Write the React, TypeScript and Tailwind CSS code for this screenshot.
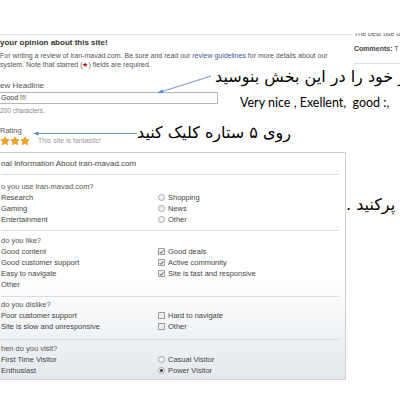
import React from "react";

const Radio = ({ checked = false }: { checked?: boolean }) => (
  <span className="inline-flex items-center justify-center w-[7px] h-[7px] rounded-full border border-[#a9a9a9] bg-[#f1f1f1] mr-[3px] shrink-0">
    {checked && <span className="w-[3px] h-[3px] rounded-full bg-[#333]" />}
  </span>
);

const Check = ({ checked = false }: { checked?: boolean }) => (
  <span className="inline-flex items-center justify-center w-[7px] h-[7px] border border-[#a0a0a0] bg-[#eef0f3] mr-[3px] shrink-0">
    {checked && (
      <svg viewBox="0 0 8 8" className="w-[6px] h-[6px]">
        <path d="M1.2 4.2 L3.2 6.2 L6.8 1.5" fill="none" stroke="#333" strokeWidth="1.3" />
      </svg>
    )}
  </span>
);

type Item = { left?: string; right?: string; kind?: "radio" | "check"; checked?: boolean };

const Section = ({
  title,
  items,
  cls,
}: {
  title: string;
  items: Item[];
  cls: string;
}) => (
  <div className={cls}>
    <div className="leading-[10px] h-[10px] text-[7.5px] text-[#555]">{title}</div>
    {items.map((it, i) => (
      <div key={i} className="grid grid-cols-[157px_1fr] h-[11px] leading-[11px] text-[7.5px] text-[#444]">
        <div className="whitespace-nowrap">{it.left ?? ""}</div>
        <div className="flex items-center whitespace-nowrap">
          {it.right && (
            <>
              {it.kind === "radio" ? <Radio checked={it.checked} /> : <Check checked={it.checked} />}
              <span>{it.right}</span>
            </>
          )}
        </div>
      </div>
    ))}
  </div>
);

const Star = () => (
  <svg viewBox="0 0 24 24" className="w-[10px] h-[10px]">
    <path
      d="M12 1.8l3.1 6.6 7.1.8-5.3 4.9 1.5 7.1L12 17.6l-6.4 3.6 1.5-7.1L1.8 9.2l7.1-.8z"
      fill="#f4a81d"
      stroke="#c97a08"
      strokeWidth="1.2"
    />
  </svg>
);

export default function App() {
  return (
    <div className="relative w-[400px] h-[400px] overflow-hidden bg-white font-['Liberation_Sans',Arial,sans-serif]">
      <div className="flex">
        {/* main column */}
        <div className="w-[352px] shrink-0">
          <div className="h-[35px] border-b border-[#e3e3e3]" />
          <div className="mt-[3px] leading-[10px] text-[8px] font-bold text-[#333] whitespace-nowrap">
            your opinion about this site!
          </div>
          <div className="mt-[3px] leading-[9px] text-[7px] text-[#555] whitespace-nowrap">
            For writing a review of iran-mavad.com. Be sure and read our{" "}
            <span className="text-[#3b5998]">review guidelines</span> for more details about our
            <br />
            system. Note that starred (<span className="text-[#b00]">★</span>) fields are required.
          </div>
          <div className="mt-[12px] leading-[10px] text-[8px] text-[#555]">ew Headline</div>
          <div className="mt-[1px] -ml-[2px] w-[220px] h-[12px] border border-[#b5b5b5] pl-[2px] leading-[10px] text-[7px] text-[#333]">
            Good !!!
          </div>
          <div className="mt-[3px] leading-[8px] text-[6.5px] text-[#888]">200 characters.</div>
          <div className="mt-[11px] leading-[10px] text-[7.5px] text-[#555]">Rating</div>
          <div className="flex items-center h-[10px]">
            <Star />
            <Star />
            <Star />
            <span className="ml-[8px] text-[7px] text-[#999]">This site is fantastic!</span>
          </div>
          {/* form box */}
          <div className="mt-[6px] -ml-[2px] w-[348px] border border-[#cfcfcf] bg-linear-to-b from-white from-[55%] to-[#e4e9ee] pl-[2px] pr-[6px]">
            <div className="pt-[6px] pb-[5px] border-b border-[#dcdcdc] leading-[10px] text-[8px] text-[#444]">
              nal Information About iran-mavad.com
            </div>
            <Section
              cls="pt-[7px] pb-[5px] border-b border-[#dcdcdc]"
              title="o you use iran-mavad.com?"
              items={[
                { left: "Research", right: "Shopping", kind: "radio" },
                { left: "Gaming", right: "News", kind: "radio" },
                { left: "Entertainment", right: "Other", kind: "radio" },
              ]}
            />
            <Section
              cls="pt-[5px] pb-[6px] border-b border-[#dcdcdc]"
              title="do you like?"
              items={[
                { left: "Good content", right: "Good deals", kind: "check", checked: true },
                { left: "Good customer support", right: "Active community", kind: "check", checked: true },
                { left: "Easy to navigate", right: "Site is fast and responsive", kind: "check", checked: true },
                { left: "Other" },
              ]}
            />
            <Section
              cls="pt-[3px] pb-[7px] border-b border-[#d4d8dc]"
              title="do you dislike?"
              items={[
                { left: "Poor customer support", right: "Hard to navigate", kind: "check" },
                { left: "Site is slow and unresponsive", right: "Other", kind: "check" },
              ]}
            />
            <Section
              cls="pt-[4px] pb-[3px]"
              title="hen do you visit?"
              items={[
                { left: "First Time Visitor", right: "Casual Visitor", kind: "radio" },
                { left: "Enthusiast", right: "Power Visitor", kind: "radio", checked: true },
              ]}
            />
          </div>
        </div>
        {/* sidebar */}
        <div className="ml-[2px] flex-1 h-[64px] border-b border-[#e0e0e0]">
          <div className="mt-[33px] h-[6px] overflow-hidden">
            <div className="-mt-[3px] leading-[8px] text-[7px] text-[#555] whitespace-nowrap">The best use o</div>
          </div>
          <div className="mt-[6px] leading-[8px] text-[7px] text-[#444] whitespace-nowrap">
            <span className="font-bold">Comments:</span> T
          </div>
        </div>
      </div>

      {/* annotation arrows */}
      <svg className="absolute inset-0 w-[400px] h-[400px] pointer-events-none" viewBox="0 0 400 400">
        <line x1="211" y1="76" x2="159" y2="92.5" stroke="#5b8bc6" strokeWidth="0.9" />
        <path d="M157 93 L162.5 89.6 L163.4 93.2 Z" fill="#5b8bc6" />
        <line x1="137" y1="133.5" x2="36" y2="133.5" stroke="#5b8bc6" strokeWidth="0.9" />
        <path d="M33 133.5 L38.5 131.5 L38.5 135.5 Z" fill="#5b8bc6" />
      </svg>

      {/* annotation texts */}
      <div
        dir="rtl"
        className="absolute left-[215px] top-[66px] whitespace-nowrap text-[16px] leading-[22px] text-black font-['DejaVu_Sans',sans-serif]"
      >
        نظر خود را در این بخش بنوسید
      </div>
      <div className="absolute left-[240px] top-[95px] whitespace-nowrap text-[12.5px] leading-[16px] text-black font-['Lato',sans-serif]">
        Very nice , Exellent,&nbsp; good :,
      </div>
      <div
        dir="rtl"
        className="absolute left-[137px] top-[122px] whitespace-nowrap text-[16px] leading-[22px] text-black font-['DejaVu_Sans',sans-serif]"
      >
        روی ۵ ستاره کلیک کنید
      </div>
      <div
        dir="rtl"
        className="absolute left-[346px] top-[194px] whitespace-nowrap text-[16px] leading-[22px] text-black font-['DejaVu_Sans',sans-serif]"
      >
        پرکنید .
      </div>
    </div>
  );
}
